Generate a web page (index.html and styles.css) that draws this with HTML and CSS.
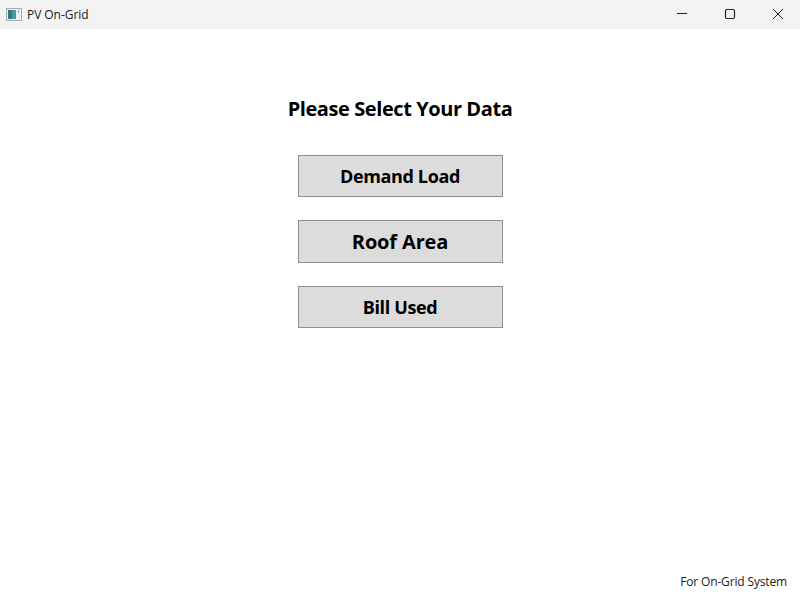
FILE: index.html
```html
<!DOCTYPE html>
<html lang="en">
<head>
    <meta charset="UTF-8">
    <meta name="viewport" content="width=device-width, initial-scale=1.0">
    <title>PV On-Grid</title>
    <link rel="stylesheet" href="styles.css">
</head>
<body>
    <div class="window">
        <header class="title-bar">
            <div class="title-left">
                <svg class="app-icon" width="16" height="13" viewBox="0 0 16 13">
                    <rect x="0.5" y="0.5" width="15" height="12" fill="#eef1f2" stroke="#a3a9ad"/>
                    <rect x="2" y="2" width="8" height="9" fill="#4a9a94"/>
                    <rect x="2" y="2" width="4" height="9" fill="#3f6f8f"/>
                    <rect x="12" y="2" width="1" height="3" fill="#7fa5a8"/>
                </svg>
                <span class="app-name">PV On-Grid</span>
            </div>
            <div class="window-controls">
                <div class="control">
                    <svg width="12" height="12" viewBox="0 0 12 12"><path d="M1 5.5H11" stroke="#222" fill="none"/></svg>
                </div>
                <div class="control">
                    <svg width="12" height="12" viewBox="0 0 12 12"><rect x="1.5" y="1.5" width="9" height="9" rx="1.5" stroke="#222" stroke-width="1.2" fill="none"/></svg>
                </div>
                <div class="control">
                    <svg width="12" height="12" viewBox="0 0 12 12"><path d="M1 1L11 11M11 1L1 11" stroke="#222" fill="none"/></svg>
                </div>
            </div>
        </header>

        <main class="content">
            <h1>Please Select Your Data</h1>
            <div class="button-list">
                <button type="button" class="data-btn">Demand Load</button>
                <button type="button" class="data-btn large">Roof Area</button>
                <button type="button" class="data-btn">Bill Used</button>
            </div>
        </main>

        <footer class="status">For On-Grid System</footer>
    </div>
</body>
</html>
```

FILE: styles.css
```css
* {
    margin: 0;
    padding: 0;
    box-sizing: border-box;
}

body {
    font-family: "Open Sans", "Noto Sans", sans-serif;
    background: #fff;
    color: #000;
}

.window {
    width: 800px;
    height: 600px;
    display: flex;
    flex-direction: column;
    overflow: hidden;
}

.title-bar {
    height: 29px;
    flex-shrink: 0;
    background: #f3f3f3;
    display: flex;
    align-items: center;
    justify-content: space-between;
}

.title-left {
    display: flex;
    align-items: center;
    gap: 5px;
    padding-left: 6px;
}

.app-name {
    font-size: 12px;
    letter-spacing: -0.05px;
    color: #1a1a1a;
}

.window-controls {
    display: flex;
    margin-right: -2px;
}

.control {
    width: 48px;
    height: 29px;
    display: flex;
    align-items: center;
    justify-content: center;
    padding-bottom: 1px;
}

.content {
    flex: 1;
    display: flex;
    flex-direction: column;
    align-items: center;
    padding-top: 66px;
}

h1 {
    font-size: 20px;
    line-height: 28px;
    font-weight: 700;
    letter-spacing: -0.42px;
    margin-bottom: 32px;
}

.button-list {
    display: flex;
    flex-direction: column;
    gap: 23px;
}

.data-btn {
    width: 205px;
    height: 42px;
    background: #dcdcdc;
    border: 1px solid #8f8f8f;
    font-family: inherit;
    font-size: 18px;
    font-weight: 700;
    letter-spacing: -0.35px;
    color: #000;
}

.data-btn.large {
    height: 43px;
    font-size: 20px;
    letter-spacing: -0.15px;
}

.status {
    align-self: flex-end;
    font-size: 12px;
    line-height: 16px;
    letter-spacing: -0.15px;
    color: #222;
    padding: 0 13px 10px 0;
}
```
